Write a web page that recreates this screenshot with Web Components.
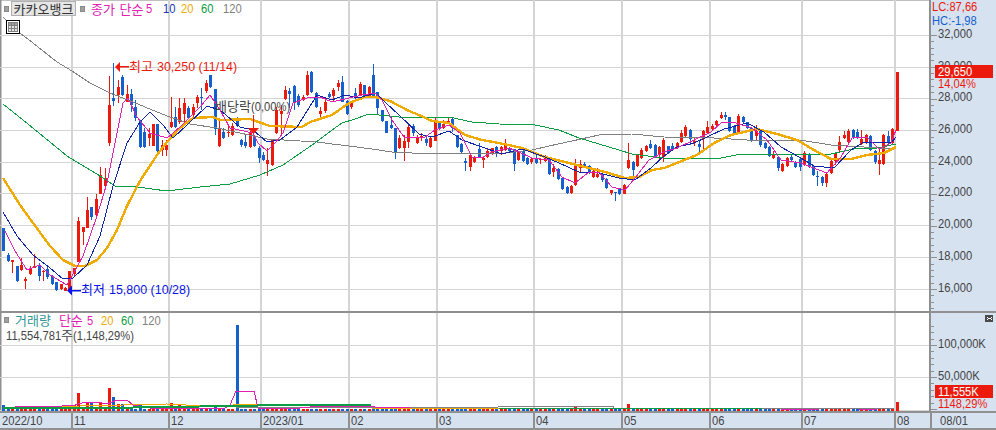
<!DOCTYPE html>
<html lang="ko"><head><meta charset="utf-8"><title>카카오뱅크</title>
<style>html,body{margin:0;padding:0;background:#fff;overflow:hidden}
body{font-family:"Liberation Sans","Noto Sans CJK KR",sans-serif;font-size:13px;color:#444}</style></head>
<body>
<stock-chart>
  <chart-pane style="height:313px">
    <price-plot slot="plot">
      <legend-bar slot="legend">
        <legend-dot></legend-dot><name-button>카카오뱅크</name-button><legend-dot></legend-dot>
        <legend-label color="#e020b0" gap="4"><k-t style="word-spacing:1px">종가 단순</k-t></legend-label>
        <legend-label color="#e020b0" gap="3"><n-t w="6">5</n-t></legend-label>
        <legend-label color="#1434b4" gap="11"><n-t w="12">10</n-t></legend-label>
        <legend-label color="#f0aa00" gap="6"><n-t w="12">20</n-t></legend-label>
        <legend-label color="#0c9c44" gap="8"><n-t w="12">60</n-t></legend-label>
        <legend-label color="#808080" gap="10"><n-t w="18">120</n-t></legend-label>
      </legend-bar>
      <table-icon slot="icon"></table-icon>
    </price-plot>
    <value-axis slot="axis" kind="price"></value-axis>
  </chart-pane>
  <chart-pane style="height:100px">
    <volume-plot slot="plot">
      <legend-bar slot="legend" style="height:14px;top:0">
        <legend-dot></legend-dot>
        <legend-label color="#2f9696" gap="4"><k-t>거래량</k-t></legend-label>
        <legend-label color="#e020b0" gap="8"><k-t>단순</k-t></legend-label>
        <legend-label color="#e020b0" gap="4"><n-t w="6">5</n-t></legend-label>
        <legend-label color="#f0aa00" gap="8"><n-t w="12">20</n-t></legend-label>
        <legend-label color="#0c9c44" gap="8"><n-t w="12">60</n-t></legend-label>
        <legend-label color="#808080" gap="9"><n-t w="18">120</n-t></legend-label>
      </legend-bar>
      <span slot="sub"><n-t w="55">11,554,781</n-t><k-t>주</k-t><n-t w="64">(1,148,29%)</n-t></span>
    </volume-plot>
    <value-axis slot="axis" kind="volume"></value-axis>
  </chart-pane>
  <date-axis>
    <date-cell w="71">2022/10</date-cell><date-cell w="97">11</date-cell><date-cell w="92">12</date-cell>
    <date-cell w="88">2023/01</date-cell><date-cell w="88">02</date-cell><date-cell w="97">03</date-cell>
    <date-cell w="88">04</date-cell><date-cell w="88">05</date-cell><date-cell w="92">06</date-cell>
    <date-cell w="93">07</date-cell><date-cell w="36">08</date-cell><date-cell w="66" pad="8">08/01</date-cell>
  </date-axis>
</stock-chart>
<script>
const C={red:'#ec1a0c',blue:'#1560cc',grid:'#d4d4d4',gold:'#f0aa00',green:'#0c9c44',mag:'#e020b0',navy:'#1024a8',gray:'#808080',axis:'#d6e2f0',rule:'#909090'};
const FONT='"Liberation Sans","Noto Sans CJK KR",sans-serif';
const KFONT='"Noto Sans CJK KR",sans-serif';
const SX=.86;
const GX=[71,168,260,348,436,533,621,709,801,894];
const GY=[35,67,98,130,162,193,225,257,289];
const CANDLES=`b 228 251 228 251|b 255 261 253 262|r 260 262 260 273|b 266 281 266 282|r 265 270 258 271|r 279 281 277 289|r 269 274 266 275|r 266 268 254 268|b 265 276 263 281|r 271 272 270 281|b 269 277 266 279|b 276 284 275 285|b 282 290 282 291|r 284 289 284 290|r 288 291 287 291|r 271 290 271 291|r 268 274 268 276|r 221 262 217 262|r 227 232 227 245|r 210 228 197 228|b 207 217 207 220|r 199 215 194 216|r 175 194 167 194|r 178 186 168 190|r 105 143 76 146|b 98 101 63 106|r 87 95 80 103|b 77 95 75 96|r 94 102 85 102|b 94 105 89 112|b 107 118 100 121|b 121 147 120 148|b 132 147 128 148|r 134 138 128 146|r 124 146 124 146|b 124 151 124 152|r 145 150 140 156|r 145 150 140 156|r 122 127 97 128|b 117 127 107 128|r 108 122 98 124|r 103 114 98 123|b 108 118 106 119|r 107 115 104 118|r 97 103 95 108|b 97 98 88 110|r 83 91 80 93|b 75 87 75 88|b 89 129 89 135|r 129 146 120 147|b 132 138 128 139|r 132 133 125 137|r 126 135 123 136|b 118 126 117 127|b 140 145 139 147|b 142 146 135 148|r 133 147 131 148|b 137 146 135 147|b 148 158 146 163|b 155 160 152 161|r 160 164 148 176|r 140 165 140 166|r 110 133 107 134|r 111 114 105 135|r 90 99 86 100|b 91 94 88 108|b 86 103 85 110|b 96 105 94 107|r 97 100 95 101|r 75 95 71 96|b 72 92 71 93|b 93 107 92 108|r 111 114 107 117|r 102 111 98 113|b 94 97 92 98|r 90 96 88 102|r 83 87 80 91|b 82 102 76 102|b 101 114 100 115|r 102 107 101 109|b 93 98 88 99|r 84 95 82 96|b 85 97 85 98|r 87 97 86 98|b 75 96 64 97|b 92 108 92 114|b 110 121 110 122|b 121 133 121 133|b 125 128 117 129|b 128 152 128 159|r 138 148 135 149|r 141 148 135 161|r 127 142 125 148|b 126 133 124 136|r 138 143 135 144|r 136 138 133 141|b 139 143 135 146|r 138 147 137 148|r 120 141 117 141|b 123 129 122 130|r 124 128 120 129|r 121 123 117 124|b 119 128 118 132|b 135 147 135 148|b 144 152 143 153|b 161 163 158 171|r 155 167 155 171|r 157 162 156 163|b 149 157 143 158|r 158 160 158 168|r 151 157 148 158|r 148 153 148 155|b 147 154 146 157|r 147 151 146 155|r 143 150 139 151|b 149 151 147 152|b 149 164 149 171|r 152 160 151 161|b 151 161 150 162|b 158 164 157 165|r 159 162 158 164|b 159 163 155 164|r 159 160 158 164|r 157 161 155 162|b 159 174 158 175|r 168 172 164 177|b 169 179 168 180|b 178 189 178 190|b 187 193 186 194|r 186 193 185 194|r 166 185 159 186|r 164 168 160 172|b 164 167 162 168|b 166 173 165 174|r 171 177 170 178|r 174 177 168 178|b 174 180 173 182|b 179 188 178 189|r 190 193 190 195|b 192 193 192 201|b 189 194 188 195|r 185 194 184 194|r 160 168 143 169|b 162 170 161 180|r 155 166 154 167|r 150 158 148 159|r 146 151 145 152|b 144 148 140 149|b 145 157 144 158|r 147 155 146 161|r 140 157 138 162|b 146 153 146 154|b 146 149 143 150|r 143 148 142 149|r 133 142 130 143|r 127 136 125 137|b 130 139 129 145|r 141 143 137 146|b 144 147 140 152|r 131 139 130 150|r 127 133 121 134|r 126 129 124 130|r 121 125 120 126|r 115 118 112 119|b 115 117 112 120|b 117 131 117 132|b 127 133 125 135|r 116 132 114 133|b 117 122 116 123|b 122 128 122 129|b 128 141 128 142|r 131 136 125 140|b 131 145 131 147|b 143 148 142 149|b 147 156 146 157|r 154 158 151 159|b 157 168 156 171|r 164 171 163 172|r 158 166 157 167|b 157 160 155 161|b 162 167 161 168|b 159 167 158 171|r 153 165 151 166|b 154 167 153 168|b 166 175 165 176|b 176 177 171 186|b 177 183 176 186|r 174 183 173 187|r 161 173 160 174|r 153 161 152 165|r 142 150 136 153|r 135 138 131 139|r 131 142 129 143|b 130 138 129 139|b 132 138 129 139|r 139 144 130 145|r 135 143 134 144|b 136 150 135 151|b 151 162 150 164|r 160 164 148 175|r 135 164 134 165|b 136 143 131 144|r 129 143 128 144|r 72 131 72 131`.split('|').map(s=>{const p=s.split(' ');return{c:p[0]==='r'?C.red:C.blue,t:+p[1],b:+p[2],wt:+p[3],wb:+p[4]}});
const MA={
m120:[3,17,20,33,33,43,57,62,72,71,90,83,110,93,133,102,157,112,170,117,190,124,217,128,240,133,267,139,317,142,332,144,349,146,372,149,392,152,412,153,455,153,505,153,532,150,549,146,572,141,599,135,632,134,664,137,714,138,747,140,767,140,806,141,831,145,864,147,894,149],
m60:[3,104,23,120,50,142,67,156,100,176,115,186,137,187,167,191,200,187,230,184,260,175,283,165,315,143,332,130,342,123,355,119,369,114,399,117,449,117,472,122,499,124,535,125,559,130,579,138,609,147,632,154,664,158,721,158,741,154,774,154,831,154,854,149,877,148,896,144],
m20:[3,178,20,205,33,223,50,246,63,260,75,266,85,266,97,260,107,248,117,230,127,206,140,181,157,155,167,142,180,128,193,118,213,117,220,120,250,119,270,126,302,127,310,122,332,115,349,103,365,97,375,97,390,101,409,111,419,115,432,121,449,123,465,135,482,140,499,143,522,148,545,157,565,162,585,167,605,172,625,178,639,177,652,170,664,168,677,163,697,155,714,143,731,135,757,129,777,134,797,140,814,150,831,159,851,159,867,155,884,153,896,147],
m10:[3,212,17,236,33,255,50,268,63,279,73,278,87,265,100,236,113,186,127,143,140,122,150,112,163,125,173,138,187,125,207,106,220,110,240,127,253,130,267,142,280,140,297,127,317,95,332,100,345,95,359,98,375,93,385,102,399,115,419,134,432,137,449,131,462,140,482,147,502,154,522,149,545,157,559,163,579,172,599,173,619,178,635,180,652,167,664,156,677,147,694,143,707,137,724,129,747,123,764,132,781,147,801,158,814,166,834,168,851,150,864,142,891,143,896,137],
m5:[5,231,15,251,27,270,40,265,50,275,67,285,83,256,97,216,107,183,115,143,123,103,128,98,137,117,150,133,167,138,180,127,200,107,210,95,220,110,230,128,253,133,258,143,267,151,275,143,283,133,293,103,307,98,320,97,332,102,349,98,362,95,375,93,382,100,392,120,404,137,425,137,435,130,449,125,460,133,472,157,482,158,492,152,509,148,519,152,532,158,549,160,562,177,575,183,589,172,599,172,612,187,625,190,635,178,649,160,664,152,677,148,694,140,711,132,722,122,736,123,752,128,767,140,781,160,801,163,811,167,827,173,841,157,852,138,867,137,879,149,891,143,896,130]
};
const pts=a=>{let s='';for(let i=0;i<a.length;i+=2)s+=a[i]+','+a[i+1]+' ';return s};
const line=(a,col,w)=>`<polyline points="${pts(a)}" fill="none" stroke="${col}" stroke-width="${w}" shape-rendering="crispEdges"/>`;
const rect=(x,y,w,h,f)=>`<rect x="${x}" y="${y}" width="${w}" height="${h}" fill="${f}"/>`;
const num=(x,y,t,f,sx=SX)=>`<text transform="translate(${x} ${y}) scale(${sx} 1)" fill="${f}">${t}</text>`;
const kor=(x,y,t,f)=>`<text class="k" x="${x}" y="${y}" fill="${f}">${t}</text>`;
const cx=i=>Math.round(3.4+4.4*i);
function define(name,css,html,init){
  customElements.define(name,class extends HTMLElement{
    connectedCallback(){ if(this.shadowRoot)return;
      const r=this.attachShadow({mode:'open'});
      r.innerHTML=`<style>${css}</style>`+(typeof html==='function'?html(this):html);
      if(init)init(this,r);}
  });
}
define('stock-chart',':host{display:flex;flex-direction:column;width:996px;height:430px;overflow:hidden;background:#fff}','<slot></slot>');
define('chart-pane',`:host{display:flex;box-sizing:border-box;width:996px;border-bottom:2px solid ${C.rule}}
 .p{flex:0 0 929px;position:relative;overflow:hidden;display:flex}.a{flex:1;border-left:2px solid ${C.rule};display:flex}`,
 '<div class="p"><slot name="plot"></slot></div><div class="a"><slot name="axis"></slot></div>');
define('k-t',`:host{font-family:${KFONT};font-size:13px}`,'<slot></slot>');
define('n-t',`:host{display:inline-block;transform:scaleX(${SX});transform-origin:0 0;white-space:nowrap}`,'<slot></slot>',t=>{t.style.width=t.getAttribute('w')+'px'});
define('legend-dot',':host{display:block;width:5px;height:6px;background:#a0a0a0;border:1px solid #8a8a8a;box-sizing:border-box;margin-left:4px;margin-right:2px}','');
define('name-button',`:host{display:block;box-sizing:border-box;width:65px;height:15px;background:#e6e6e6;border:1px solid #b0b0b0;font:13px/13px ${KFONT};color:#333;text-align:center;white-space:nowrap}`,'<slot></slot>');
define('legend-label',`:host{display:block;line-height:15px;white-space:nowrap}`,'<slot></slot>',(t)=>{t.style.color=t.getAttribute('color');t.style.marginLeft=t.getAttribute('gap')+'px'});
define('legend-bar',':host{position:absolute;left:0;top:1px;display:flex;align-items:center;height:15px}','<slot></slot>');
define('table-icon',':host{position:absolute;left:6px;top:20px;display:block;width:14px;height:14px}',
 `<svg width="14" height="14" viewBox="0 0 14 14" shape-rendering="crispEdges" style="display:block"><rect x=".5" y=".5" width="13" height="13" fill="#fff" stroke="#000"/><rect x="2.500" y="2.500" width="9" height="9" fill="#e4e4e4" stroke="#808080"/><rect x="3" y="3" width="8" height="2" fill="#a0a0a0"/><path d="M5.500 3v8M8.500 3v8M3 5.500h8M3 8.500h8" stroke="#808080" fill="none"/></svg>`);
function grid(h,ys,off){let s='';GX.forEach(x=>s+=rect(x,0,1.5,h,C.grid));ys.forEach(y=>s+=rect(0,y-off,929,1,C.grid));return s}
define('price-plot',`:host{display:block;position:relative;width:929px;height:311px}svg{display:block;position:absolute;left:0;top:0}
 text{font-family:${FONT};font-size:13px}.k{font-family:${KFONT};font-size:13px}`,
 ()=>{let c='';CANDLES.forEach((d,i)=>{const x=cx(i);c+=rect(x,d.wt,1,Math.max(0,d.wb-d.wt),d.c)+rect(x-1,d.t,3,Math.max(1,d.b-d.t),d.c)});
  return `<svg width="929" height="311" viewBox="0 0 929 311"><rect x="0" y="0" width="929" height="1" fill="#c0c0c0"/><rect x="0" y="0" width="1.5" height="311" fill="${C.rule}"/>
  <g shape-rendering="crispEdges">${grid(311,GY,0)}${c}</g>
  ${line(MA.m120,C.gray,1)}${line(MA.m60,C.green,1)}${line(MA.m20,C.gold,2.4)}${line(MA.m10,C.navy,1)}${line(MA.m5,C.mag,1)}
  <path d="M115 67l5-5v10z" fill="${C.red}"/><rect x="119" y="66" width="10" height="1.500" fill="${C.red}"/>
  ${kor(129,71,'최고',C.red)}${num(157,71,'30,250 (11/14)',C.red,.96)}
  <path d="M67 290.500l5-5v10z" fill="#0a14e6"/><rect x="71" y="290" width="10" height="1.500" fill="#0a14e6"/>
  ${kor(81,294,'최저','#0a14e6')}${num(109,294,'15,800 (10/28)','#0a14e6',.96)}
  <path d="M248 128h11l-5.500 6z" fill="${C.red}"/><rect x="253" y="115" width="1" height="14" fill="${C.red}"/>
  ${kor(215,111,'배당락','#444')}${num(251,111,'(0,00%)','#444')}
  </svg><slot name="legend"></slot><slot name="icon"></slot>`});
const VOLBIG={0:405,16:405,17:393,19:403,20:403,22:402,24:388,25:397,26:404,27:404,31:405,38:403,40:404,48:405,53:325,84:407,98:407,105:407,106:407,130:407,142:404,203:402};
const VM={
 gold:[3,408,80,406,167,404,175,405,177,404,186,405,195,405,233,405,236,404,320,404,325,406,372,408,499,408],
 green:[3,408,100,408,233,406,283,405,371,405],
 gray:[236,407,258,407,410,407,498,407,499,406,613,406,613,408,664,408,894,408],
 green2:[499,408,612,408,664,408,762,408],
 mag:[15,406,41,406,50,407,75,405,85,402,97,402,107,404,117,400,127,400,133,405,150,408,225,408,230,405,236,391,254,391,258,408,283,408,300,408,320,406,372,406,375,407,410,407]
};
define('volume-plot',`:host{display:block;position:relative;width:929px;height:98px}svg{display:block;position:absolute;left:0;top:0}
 .s{position:absolute;left:6px;top:14px;line-height:15px;color:#444;white-space:nowrap}`,
 ()=>{let c='';const off=313;CANDLES.forEach((d,i)=>{const x=cx(i);const t=VOLBIG[i]||409;c+=rect(x-1,t-off,3,411-t,d.c)});
  const sh=a=>a.map((v,i)=>i%2?v-off:v);
  return `<svg width="929" height="98" viewBox="0 0 929 98"><rect x="0" y="0" width="1.5" height="98" fill="${C.rule}"/><g shape-rendering="crispEdges">${grid(98,[345,377],off)}<rect x="0" y="97" width="929" height="1" fill="${C.grid}"/>${c}
  <rect x="781" y="96" width="38" height="1" fill="${C.mag}"/><rect x="859" y="96" width="18" height="1" fill="${C.mag}"/></g>
  ${line(sh(VM.gold),C.gold,1)}${line(sh(VM.gray),C.gray,1)}${line(sh(VM.mag),C.mag,1)}${line(sh(VM.green),C.green,2)}${line(sh(VM.green2),C.green,1)}
  </svg><slot name="legend"></slot><div class="s"><slot name="sub"></slot></div>`});
function axisSvg(kind){
 let s='';const R=C.red;
 const tick=(y,l)=>rect(0,y,l,1,C.rule);
 const lbl=(y,t,f='#444')=>num(7,y,t,f);
 if(kind==='price'){
  for(let i=0;i<46;i++){const y=Math.round(35+i*6.35);if(y<311)s+=tick(y,i%5===0?6:3)}
  [[32000,0],[30000,1],[28000,2],[26000,3],[24000,4],[22000,5],[20000,6],[18000,7],[16000,8]].forEach(([v,k])=>{if(k!==1)s+=lbl(GY[k]+3,v.toLocaleString('en-US'))});
  s+=lbl(70,'30,000')+rect(4,65,58,13,R)+num(7,76,'29,650','#fff')+lbl(88,'14,04%',R);
  s+=num(1,11,'LC:87,66',R)+num(1,25,'HC:-1,98',C.blue);
  return `<svg width="65" height="311" viewBox="0 0 65 311" shape-rendering="crispEdges">${s}</svg>`;
 }
 const off=313;
 for(let i=-3;i<11;i++){const y=Math.round(345-off+i*6.4);if(y>=0&&y<98)s+=tick(y,i%5===0?6:3)}
 s+=lbl(35,'100,000K')+lbl(67,'50,000K');
 s+=rect(4,72,58,13,R)+num(7,83,'11,555K','#fff')+lbl(95,'1148,29%',R);
 s+=rect(54,2,8,7,'#4a4a4a')+`<path d="M56 4h1v1h-1zM60 4h1v1h-1zM57 5h3v1h-3zM56 6h1v1h-1zM60 6h1v1h-1z" fill="#fff"/>`;
 return `<svg width="65" height="98" viewBox="0 0 65 98" shape-rendering="crispEdges">${s}</svg>`;
}
define('value-axis',`:host{display:block;flex:1;background:${C.axis}}svg{display:block}text{font-family:${FONT};font-size:13px;shape-rendering:auto}`,t=>axisSvg(t.getAttribute('kind')));
define('date-axis',`:host{display:flex;box-sizing:border-box;height:17px;background:${C.axis};border-bottom:2px solid ${C.rule}}`,'<slot></slot>');
define('date-cell',`:host{display:block;box-sizing:border-box;height:15px;border-left:2px solid ${C.rule};padding-left:1px;font-size:13px;line-height:15px;color:#444;white-space:nowrap}
 span{display:inline-block;transform:scaleX(${SX});transform-origin:0 0}
 :host(:first-child){border-left:0;padding-left:2px}`,'<span><slot></slot></span>',t=>{t.style.width=t.getAttribute('w')+'px';if(t.hasAttribute('pad'))t.style.paddingLeft=t.getAttribute('pad')+'px'});
</script>
</body></html>
